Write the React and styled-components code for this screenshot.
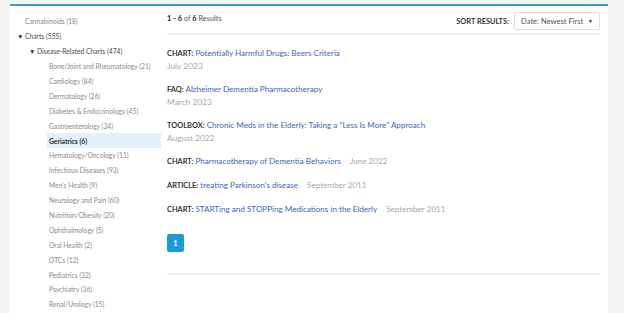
import styled, { createGlobalStyle } from "styled-components";

const GlobalStyle = createGlobalStyle`
  html, body {
    margin: 0;
    padding: 0;
    background-color: #f6f5f3;
    font-family: Lato, "Open Sans", sans-serif;
  }
`;

const Page = styled.div`
  display: flex;
  height: 313px;
  padding: 4px 16px 0 10px;
  box-sizing: border-box;
  overflow: hidden;
`;

const Panel = styled.div`
  flex: 1;
  display: flex;
  background-color: white;
  border-top: 2px solid #3d9cc0;
`;

const Sidebar = styled.ul`
  width: 151px;
  margin: 0;
  padding: 8px 0 0 0;
  list-style: none;
`;

const SideItem = styled.li`
  display: flex;
  align-items: center;
  height: 14.9px;
  padding-left: ${(p) => p.$indent}px;
  font-size: 6.7px;
  color: ${(p) => (p.$dark ? "#4a4a4a" : "#8a8a8a")};
  font-weight: ${(p) => (p.$active ? 700 : 400)};
  white-space: nowrap;
`;

const SideLabel = styled.span`
  display: flex;
  align-items: center;
  flex: 1;
  height: 100%;
  padding-left: 2px;
  color: ${(p) => (p.$active ? "#2a2a2a" : "inherit")};
  background-color: ${(p) => (p.$active ? "#e4f1fb" : "transparent")};
`;

const Caret = styled.span`
  width: 6px;
  font-size: 6.5px;
  color: #333;
`;

const Main = styled.main`
  flex: 1;
  margin-left: 6px;
  margin-right: 8px;
`;

const Header = styled.div`
  display: flex;
  align-items: center;
  justify-content: space-between;
  height: 26px;
  padding-top: 1px;
  border-bottom: 2px solid #eeeeee;
`;

const Count = styled.span`
  font-size: 7.4px;
  color: #555;
  margin-top: -4px;
  b {
    color: #222;
  }
`;

const Sort = styled.div`
  display: flex;
  align-items: center;
  gap: 5px;
  margin-top: 2px;
`;

const SortLabel = styled.span`
  font-size: 7.4px;
  font-weight: 700;
  color: #333;
`;

const Select = styled.div`
  display: flex;
  align-items: center;
  justify-content: space-between;
  width: 86px;
  height: 18px;
  box-sizing: border-box;
  padding: 0 6px;
  border: 1px solid #dedede;
  border-radius: 2px;
  font-size: 7.6px;
  color: #555;
  span:last-child {
    font-size: 5px;
    color: #222;
  }
`;

const Results = styled.ul`
  margin: 12px 0 0 0;
  padding: 0;
  list-style: none;
`;

const Result = styled.li`
  margin-bottom: 11px;
  font-size: 8.1px;
  line-height: 12px;
`;

const Kind = styled.span`
  font-size: 7.4px;
  font-weight: 700;
  color: #333;
`;

const Title = styled.a`
  color: #3b63c4;
  text-decoration: none;
`;

const Date = styled.span`
  display: ${(p) => (p.$inline ? "inline" : "block")};
  margin-left: ${(p) => (p.$inline ? "9px" : "0")};
  font-size: ${(p) => (p.$inline ? "8.1px" : "8.4px")};
  color: #a8a8a8;
`;

const Pager = styled.div`
  display: flex;
  padding: 7px 0 21px;
  border-bottom: 2px solid #eeeeee;
`;

const PageButton = styled.button`
  width: 17px;
  height: 18px;
  padding: 0;
  border: none;
  border-radius: 2px;
  background-color: #1a9bd7;
  color: white;
  font-family: Lato, sans-serif;
  font-size: 7.4px;
  font-weight: 700;
`;

const categories = [
  ["Bone/Joint and Rheumatology", 21],
  ["Cardiology", 84],
  ["Dermatology", 26],
  ["Diabetes & Endocrinology", 45],
  ["Gastroenterology", 34],
  ["Geriatrics", 6],
  ["Hematology/Oncology", 11],
  ["Infectious Diseases", 93],
  ["Men's Health", 9],
  ["Neurology and Pain", 60],
  ["Nutrition/Obesity", 20],
  ["Ophthalmology", 5],
  ["Oral Health", 2],
  ["OTCs", 12],
  ["Pediatrics", 32],
  ["Psychiatry", 36],
  ["Renal/Urology", 15],
];

const results = [
  { kind: "CHART", title: "Potentially Harmful Drugs: Beers Criteria", date: "July 2023" },
  { kind: "FAQ", title: "Alzheimer Dementia Pharmacotherapy", date: "March 2023" },
  {
    kind: "TOOLBOX",
    title: "Chronic Meds in the Elderly: Taking a \u201CLess Is More\u201D Approach",
    date: "August 2022",
  },
  { kind: "CHART", title: "Pharmacotherapy of Dementia Behaviors", date: "June 2022", inline: true },
  { kind: "ARTICLE", title: "treating Parkinson's disease", date: "September 2011", inline: true },
  {
    kind: "CHART",
    title: "STARTing and STOPPing Medications in the Elderly",
    date: "September 2011",
    inline: true,
  },
];

export default function App() {
  return (
    <>
      <GlobalStyle />
      <Page>
        <Panel>
          <Sidebar>
            <SideItem $indent={13}>
              <SideLabel>Cannabinoids (18)</SideLabel>
            </SideItem>
            <SideItem $indent={7} $dark>
              <Caret>▼</Caret>
              <SideLabel>Charts (555)</SideLabel>
            </SideItem>
            <SideItem $indent={19} $dark>
              <Caret>▼</Caret>
              <SideLabel>Disease-Related Charts (474)</SideLabel>
            </SideItem>
            {categories.map(([name, n]) => (
              <SideItem key={name} $indent={37} $active={name === "Geriatrics"}>
                <SideLabel $active={name === "Geriatrics"}>
                  {name} ({n})
                </SideLabel>
              </SideItem>
            ))}
          </Sidebar>

          <Main>
            <Header>
              <Count>
                <b>1 - 6</b> of <b>6</b> Results
              </Count>
              <Sort>
                <SortLabel>SORT RESULTS:</SortLabel>
                <Select>
                  <span>Date: Newest First</span>
                  <span>▼</span>
                </Select>
              </Sort>
            </Header>

            <Results>
              {results.map((r) => (
                <Result key={r.title}>
                  <Kind>{r.kind}:</Kind> <Title href="#">{r.title}</Title>
                  <Date $inline={r.inline}>{r.date}</Date>
                </Result>
              ))}
            </Results>

            <Pager>
              <PageButton>1</PageButton>
            </Pager>
          </Main>
        </Panel>
      </Page>
    </>
  );
}
